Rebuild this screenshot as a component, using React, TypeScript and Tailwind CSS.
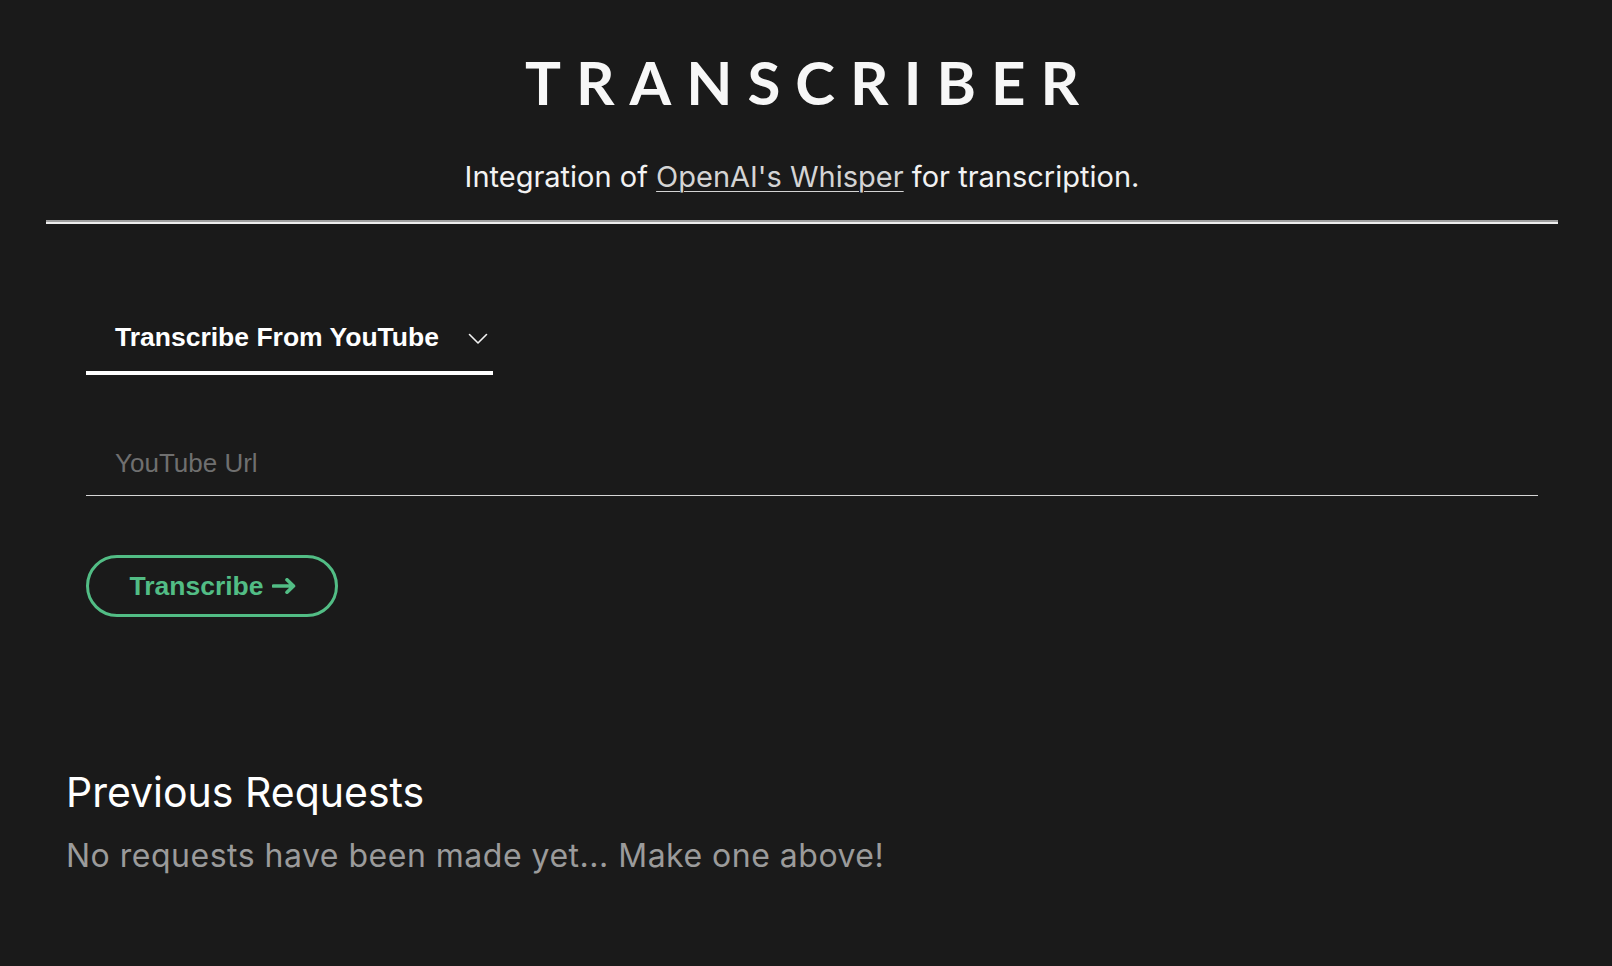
import { ChangeEvent, useState } from "react"

const sans = "font-['Inter','Noto_Sans',sans-serif]"
const arial = "font-['Liberation_Sans','Arial',sans-serif]"

const Chevron = () => (
  <svg width="20" height="12" viewBox="0 0 20 12" fill="none" className="mt-1">
    <path d="M1.5 1.5 10 10l8.5-8.5" stroke="#f2f2f2" strokeWidth="1.6" strokeLinecap="round" strokeLinejoin="round" />
  </svg>
)

const Arrow = () => (
  <svg width="25" height="16" viewBox="0 0 25 16" fill="none">
    <path d="M1.5 8h20M15 1.8 21.5 8 15 14.2" stroke="currentColor" strokeWidth="3.6" strokeLinecap="round" strokeLinejoin="round" />
  </svg>
)

const App = () => {
  const [url, setUrl] = useState("")

  return (
    <div className="min-h-screen bg-[#1a1a1a] text-white">
      <div className="pl-[46px] pr-[54px]">
        <h1 className="pt-[52px] pl-[15px] text-center font-['Lato',sans-serif] text-[60px] font-bold leading-none tracking-[15px] text-[#f7f7f7]">
          TRANSCRIBER
        </h1>
        <p className={`${sans} mt-[50px] text-center text-[29px] leading-none text-[#f2f2f2]`}>
          Integration of{" "}
          <a href="#" className="text-[#d4d4d4] underline decoration-1 underline-offset-4">OpenAI's Whisper</a>{" "}
          for transcription.
        </p>
        <div className="mt-[29px] h-[4px] border-t-2 border-b-2 border-t-[#9f9f9f] border-b-[#ededed]" />

        <div className="ml-[40px] mr-[20px]">
          <div className="mt-[100px] flex w-[407px] items-center border-b-4 border-white pb-[20px] pl-[29px]">
            <span className={`${arial} text-[26.5px] font-bold leading-none text-white`}>Transcribe From YouTube</span>
            <span className="ml-[29px]"><Chevron /></span>
          </div>

          <div className="mt-[76px] border-b border-[#d6d6d6] pb-[17px]">
            <input
              value={url}
              onChange={(e: ChangeEvent<HTMLInputElement>) => setUrl(e.target.value)}
              placeholder="YouTube Url"
              className={`${arial} h-[26px] w-full bg-transparent pl-[29px] text-[26px] leading-none text-white outline-none placeholder:text-[#6f6f6f]`}
            />
          </div>

          <button className={`${arial} mt-[59px] flex h-[62px] w-[252px] items-center justify-center gap-[8px] rounded-full border-[3px] border-[#52bd85] pl-[2px] text-[26.5px] font-bold leading-none text-[#52bd85]`}>
            Transcribe <Arrow />
          </button>
        </div>

        <div className={`${sans} ml-[20px] mt-[155px]`}>
          <h2 className="text-[41px] leading-none text-white">Previous Requests</h2>
          <p className="mt-[27px] text-[32px] leading-none tracking-[0.5px] text-[#9b9b9b]">No requests have been made yet... Make one above!</p>
        </div>
      </div>
    </div>
  )
}

export default App
